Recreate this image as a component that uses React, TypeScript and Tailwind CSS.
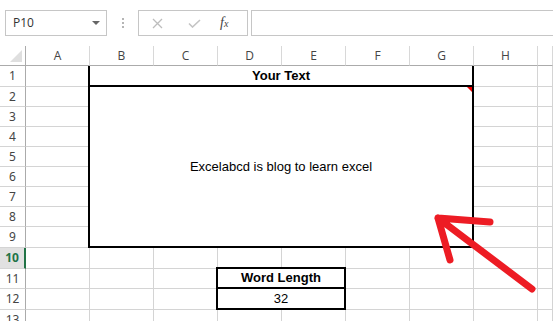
import React from 'react'

const COLS = ['A', 'B', 'C', 'D', 'E', 'F', 'G', 'H', '']
const ROWS = [1, 2, 3, 4, 5, 6, 7, 8, 9, 10, 11, 12, 13]

const cell = 'border-r border-b border-[#d4d4d4]'
const cellFont = { fontFamily: '"Liberation Sans", Arial, sans-serif' }
const uiFont = { fontFamily: '"Open Sans", "Noto Sans", sans-serif' }

function FormulaBar() {
  return (
    <div className="h-[46px] flex items-start pt-[10px] pl-[5px]" style={uiFont}>
      <div className="w-[102px] h-[26px] border border-[#c6c6c6] flex items-center pl-[7px] pr-[6px] text-[12px] text-[#333]">
        <span className="flex-1">P10</span>
        <span className="w-0 h-0 border-l-[4px] border-r-[4px] border-t-[4px] border-l-transparent border-r-transparent border-t-[#666]" />
      </div>
      <div className="w-[31px] h-[26px] flex flex-col items-center justify-center gap-[2px]">
        <span className="w-[2px] h-[2px] bg-[#b5b5b5]" />
        <span className="w-[2px] h-[2px] bg-[#b5b5b5]" />
        <span className="w-[2px] h-[2px] bg-[#b5b5b5]" />
      </div>
      <div className="w-[110px] h-[26px] border border-[#c6c6c6] flex items-center pl-[13px]">
        <svg width="11" height="11" viewBox="0 0 11 11" className="mr-[25px]">
          <path d="M1 1 L10 10 M10 1 L1 10" stroke="#bdbdbd" strokeWidth="1.3" fill="none" />
        </svg>
        <svg width="13" height="9" viewBox="0 0 13 9" className="mr-[19px]">
          <path d="M1 4.5 L4.5 8 L12 1" stroke="#c4c4c4" strokeWidth="1.6" fill="none" />
        </svg>
        <span className="italic text-[14px] text-[#444] leading-none" style={{ fontFamily: '"Liberation Serif", serif' }}>
          f<span className="text-[10px]">x</span>
        </span>
      </div>
      <div className="ml-[3px] flex-1 h-[26px] border-t border-b border-l border-[#c6c6c6]" />
    </div>
  )
}

function RowHeader({ n }: { n: number }) {
  if (n === 10) {
    return (
      <div className="border-b border-[#d4d4d4] border-r-2 border-r-[#217346] bg-[#e1e1e1] text-[#217346] font-bold flex items-center justify-center text-[12px]">
        {n}
      </div>
    )
  }
  return (
    <div className="border-b border-[#d4d4d4] border-r border-r-[#ababab] text-[#444] flex items-center justify-center text-[12px]">
      {n}
    </div>
  )
}

function Row({ n }: { n: number }) {
  const items: React.ReactNode[] = [<RowHeader key="h" n={n} />]
  COLS.forEach((c) => {
    const key = c || 'I'
    if (n === 1 && c === 'B') {
      items.push(
        <div
          key={key}
          className="col-span-6 -ml-[2px] border-l-2 border-r-2 border-b-2 border-black flex items-center justify-center font-bold text-[13px] text-black"
          style={cellFont}
        >
          Your Text
        </div>
      )
      return
    }
    if (n === 2 && c === 'B') {
      items.push(
        <div
          key={key}
          className="col-span-6 row-span-8 relative -ml-[2px] border-l-2 border-r-2 border-b-2 border-black flex items-center justify-center text-[13px] text-black"
          style={cellFont}
        >
          Excelabcd is blog to learn excel
          {/* comment marker */}
          <span className="absolute top-0 right-0 w-0 h-0 border-t-[5px] border-l-[5px] border-t-[#e00] border-l-transparent" />
        </div>
      )
      return
    }
    if ((n === 11 || n === 12) && c === 'D') {
      items.push(
        <div
          key={key}
          className={
            n === 11
              ? 'col-span-2 -ml-[2px] -mt-[2px] border-2 border-black flex items-center justify-center font-bold text-[13px] text-black'
              : 'col-span-2 -ml-[2px] border-l-2 border-r-2 border-b-2 border-black flex items-center justify-center text-[13px] text-black'
          }
          style={cellFont}
        >
          {n === 11 ? 'Word Length' : '32'}
        </div>
      )
      return
    }
    // cells covered by the merged ranges
    if (n <= 9 && ['B', 'C', 'D', 'E', 'F', 'G'].includes(c)) return
    if ((n === 11 || n === 12) && c === 'E') return
    items.push(<div key={key} className={cell} />)
  })
  return <>{items}</>
}

export default function App() {
  return (
    <div className="relative w-[553px] h-[321px] overflow-hidden bg-white">
      <FormulaBar />
      <div className="grid grid-cols-[26px_repeat(8,64px)_1fr] grid-rows-[20px_21px_20px_20px_20px_20px_20px_20px_20px_21px_21px_20px_21px_20px] h-[275px]">
        <div className="relative border-r border-b border-r-[#ababab] border-b-[#ababab]">
          <svg className="absolute right-[3px] bottom-[3px]" width="12" height="12" viewBox="0 0 12 12">
            <path d="M12 0 L12 12 L0 12 Z" fill="#dfdfdf" />
          </svg>
        </div>
        {COLS.map((c, i) => (
          <div
            key={'h' + i}
            className="border-b border-b-[#ababab] border-r border-r-[#d8d8d8] flex items-center justify-center text-[12px] text-[#444]"
            style={uiFont}
          >
            {c}
          </div>
        ))}
        {ROWS.map((n) => (
          <Row key={n} n={n} />
        ))}
      </div>
      <svg className="absolute top-0 left-0 pointer-events-none" width="553" height="321" viewBox="0 0 553 321">
        <path
          d="M532 289 L438 218 M490 222 L438 218 L450 260"
          stroke="#ed1c24"
          strokeWidth="7"
          strokeLinecap="round"
          strokeLinejoin="round"
          fill="none"
        />
      </svg>
    </div>
  )
}
